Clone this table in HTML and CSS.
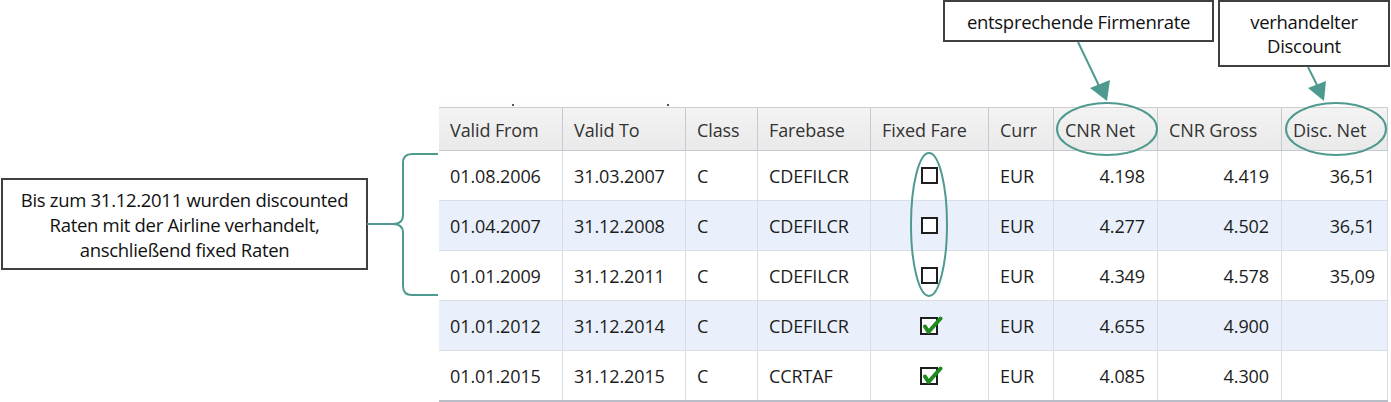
FILE: index.html
```html
<!DOCTYPE html>
<html lang="de">
<head>
<meta charset="utf-8">
<title>Firmenraten</title>
<link rel="stylesheet" href="styles.css">
</head>
<body>
<div class="stage">
  <div class="table-wrap">
    <div class="top-strip"><span class="tick t1"></span><span class="tick t2"></span></div>
    <div class="grid">
      <div class="row head">
        <div class="c">Valid From</div><div class="c">Valid To</div><div class="c">Class</div><div class="c">Farebase</div><div class="c">Fixed Fare</div><div class="c">Curr</div><div class="c">CNR Net</div><div class="c">CNR Gross</div><div class="c">Disc. Net</div>
      </div>
      <div class="row">
        <div class="c">01.08.2006</div><div class="c">31.03.2007</div><div class="c">C</div><div class="c">CDEFILCR</div><div class="c mid"><span class="cb"></span></div><div class="c">EUR</div><div class="c num">4.198</div><div class="c num">4.419</div><div class="c num">36,51</div>
      </div>
      <div class="row alt">
        <div class="c">01.04.2007</div><div class="c">31.12.2008</div><div class="c">C</div><div class="c">CDEFILCR</div><div class="c mid"><span class="cb"></span></div><div class="c">EUR</div><div class="c num">4.277</div><div class="c num">4.502</div><div class="c num">36,51</div>
      </div>
      <div class="row">
        <div class="c">01.01.2009</div><div class="c">31.12.2011</div><div class="c">C</div><div class="c">CDEFILCR</div><div class="c mid"><span class="cb"></span></div><div class="c">EUR</div><div class="c num">4.349</div><div class="c num">4.578</div><div class="c num">35,09</div>
      </div>
      <div class="row alt">
        <div class="c">01.01.2012</div><div class="c">31.12.2014</div><div class="c">C</div><div class="c">CDEFILCR</div><div class="c mid"><svg class="cbx" width="24" height="20" viewBox="0 0 24 20"><rect x="1" y="2" width="16" height="16" fill="#fff" stroke="#1e1e1e" stroke-width="2"/><path d="M5 10.5 L8.5 16 L20.5 2.5" fill="none" stroke="#1f8a1f" stroke-width="4" stroke-linecap="round" stroke-linejoin="round"/></svg></div><div class="c">EUR</div><div class="c num">4.655</div><div class="c num">4.900</div><div class="c num"></div>
      </div>
      <div class="row last">
        <div class="c">01.01.2015</div><div class="c">31.12.2015</div><div class="c">C</div><div class="c">CCRTAF</div><div class="c mid"><svg class="cbx" width="24" height="20" viewBox="0 0 24 20"><rect x="1" y="2" width="16" height="16" fill="#fff" stroke="#1e1e1e" stroke-width="2"/><path d="M5 10.5 L8.5 16 L20.5 2.5" fill="none" stroke="#1f8a1f" stroke-width="4" stroke-linecap="round" stroke-linejoin="round"/></svg></div><div class="c">EUR</div><div class="c num">4.085</div><div class="c num">4.300</div><div class="c num"></div>
      </div>
    </div>
  </div>

  <div class="callout note-left">Bis zum 31.12.2011 wurden discounted<br>Raten mit der Airline verhandelt,<br>anschließend fixed Raten</div>
  <div class="callout note-rate">entsprechende Firmenrate</div>
  <div class="callout note-disc">verhandelter<br>Discount</div>

  <svg class="overlay" width="1391" height="402" viewBox="0 0 1391 402">
    <g fill="none" stroke="#4f9a8f" stroke-width="2">
      <ellipse cx="1107" cy="129" rx="50" ry="26"/>
      <ellipse cx="1336" cy="129" rx="50" ry="26"/>
      <ellipse cx="929" cy="224.5" rx="18" ry="71.5"/>
      <path d="M438 154 H412 Q403 154 403 163 V215 Q403 224 393 224 H367 M393 224 Q403 224 403 233 V286 Q403 295 412 295 H438"/>
    </g>
    <line x1="1078" y1="42" x2="1101" y2="90" stroke="#4f9a8f" stroke-width="2"/>
    <path d="M1107 101 L1090 88 L1110 80 Z" fill="#4f9a8f"/>
    <line x1="1308" y1="67" x2="1319" y2="89" stroke="#4f9a8f" stroke-width="2"/>
    <path d="M1324 101 L1308 88 L1326 81 Z" fill="#4f9a8f"/>
  </svg>
</div>
</body>
</html>
```

FILE: styles.css
```css
* { box-sizing: border-box; }
html, body { margin: 0; padding: 0; background: #fff; }
body { width: 1391px; height: 402px; overflow: hidden; }

.stage {
  position: relative;
  width: 1391px;
  height: 402px;
}

.table-wrap {
  padding-top: 103px;
  padding-left: 439px;
}

.top-strip {
  position: relative;
  width: 240px;
  height: 4px;
  background: #fdfdfd;
}
.tick {
  position: absolute;
  top: 1px;
  width: 2px;
  height: 2px;
  background: #555;
}
.t1 { left: 73px; }
.t2 { left: 228px; }

.grid {
  width: 949px;
  font-family: "Open Sans", "Noto Sans", sans-serif;
  font-size: 18px;
  color: #1c1c1c;
  border-bottom: 2px solid #b9bec6;
}

.row {
  display: grid;
  grid-template-columns: 124px 123px 72px 113px 118px 65px 104px 124px 106px;
  height: 50px;
  background: #fff;
}
.row.alt { background: #e9f0fb; }
.row.last { height: 49px; }

.c {
  display: flex;
  align-items: center;
  padding: 0 11px;
  border-right: 1px solid #d8dde6;
  border-bottom: 1px solid #d8dde6;
  white-space: nowrap;
  letter-spacing: -0.1px;
}
.row.last .c { border-bottom: none; }
.c.num { justify-content: flex-end; padding-right: 12px; }
.c.mid { justify-content: center; padding: 0; }

.row.head {
  height: 44px;
  background: linear-gradient(#f3f3f3, #e9e9e9);
  border-top: 1px solid #cfcfcf;
  color: #333;
}
.row.head .c {
  border-right: 1px solid #c6cad0;
  border-bottom: 1px solid #c6cad0;
  padding-top: 1px;
}

.cb {
  display: block;
  width: 17px;
  height: 17px;
  border: 2px solid #1e1e1e;
  background: #fff;
}
.cbx { display: block; margin-left: 4px; }

.callout {
  position: absolute;
  background: #fff;
  border: 2px solid #404040;
  font-family: "Open Sans", "Noto Sans", sans-serif;
  font-size: 18.5px;
  color: #111;
  text-align: center;
  display: flex;
  align-items: center;
  justify-content: center;
  letter-spacing: -0.3px;
}
.note-left {
  left: 1px;
  top: 178px;
  width: 367px;
  height: 92px;
  line-height: 25px;
}
.note-rate {
  left: 943px;
  top: 0;
  width: 271px;
  height: 42px;
}
.note-disc {
  left: 1218px;
  top: 0;
  width: 172px;
  height: 67px;
  line-height: 24px;
}

.overlay {
  position: absolute;
  left: 0;
  top: 0;
  pointer-events: none;
}
```
